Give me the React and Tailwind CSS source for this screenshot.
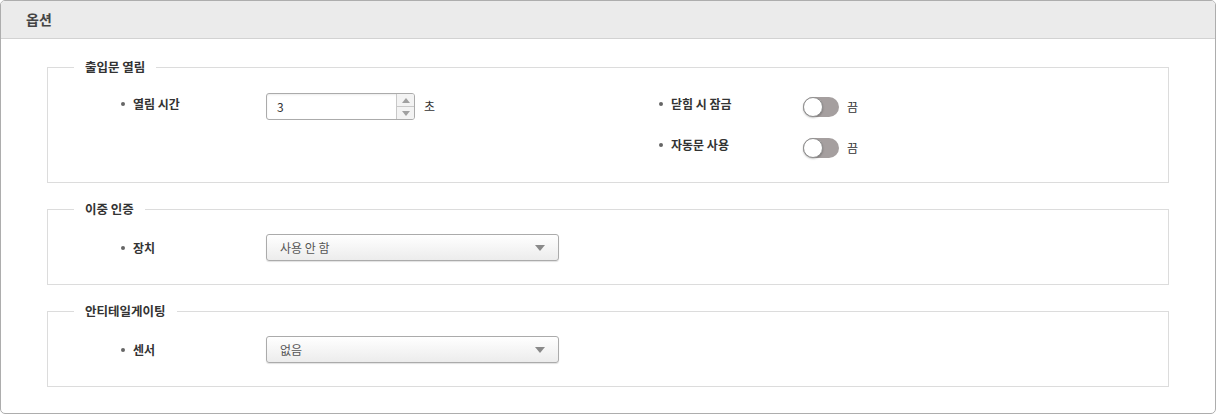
import React from "react";

const FONT = "font-['Noto_Sans_CJK_KR','Noto_Sans',sans-serif]";

function Bullet({ offset = "ml-[1px]" }) {
  return <span className={`${offset} w-[4px] h-[4px] rounded-full bg-[#666] shrink-0`} />;
}

function Label({ children, width = "w-[146px]", offset, shift = "pb-[5px]" }) {
  return (
    <div className={`${width} shrink-0 flex items-center h-[27px] ${shift}`}>
      <Bullet offset={offset} />
      <span className="ml-[8px] text-[12px] font-bold text-[#333] leading-[18px]">{children}</span>
    </div>
  );
}

function Fieldset({ title, pad, children }) {
  return (
    <div className={`relative border border-[#dcdcdc] ${pad}`}>
      <span className="absolute -top-[10px] left-[26px] px-[11px] bg-white text-[12.5px] font-bold text-[#333] leading-[18px]">
        {title}
      </span>
      {children}
    </div>
  );
}

function Toggle() {
  return (
    <div className="relative w-[36px] h-[20px] rounded-full bg-[#a59f9f]">
      <div className="absolute left-0 top-0 w-[20px] h-[20px] rounded-full bg-white border border-[#8f8f8f] shadow-[0_1px_2px_rgba(0,0,0,0.25)]" />
    </div>
  );
}

function Spinner() {
  return (
    <div className="flex items-center">
      <div className="w-[149px] h-[27px] border border-[#ababab] rounded-[3px] flex overflow-hidden shadow-[inset_0_1px_2px_rgba(0,0,0,0.08)] bg-white">
        <div className="flex-1 flex items-center pl-[10px] text-[12px] text-[#333]">3</div>
        <div className="w-[18px] border-l border-[#c8c8c8] flex flex-col bg-[#f3f3f3]">
          <div className="flex-1 flex items-center justify-center border-b border-[#c8c8c8]">
            <svg width="8" height="5" viewBox="0 0 8 5"><path d="M0 5 L4 0 L8 5 Z" fill="#a0a0a0" /></svg>
          </div>
          <div className="flex-1 flex items-center justify-center">
            <svg width="8" height="5" viewBox="0 0 8 5"><path d="M0 0 L8 0 L4 5 Z" fill="#a0a0a0" /></svg>
          </div>
        </div>
      </div>
      <span className="ml-[9px] mb-[1px] text-[12px] text-[#333]">초</span>
    </div>
  );
}

function Select({ value }) {
  return (
    <div className="w-[293px] h-[27px] border border-[#ababab] rounded-[3px] bg-gradient-to-b from-white to-[#ececec] shadow-[0_1px_1px_rgba(0,0,0,0.12)] flex items-center justify-between pl-[13px] pr-[13px]">
      <span className="text-[12px] text-[#555]">{value}</span>
      <svg width="10" height="6" viewBox="0 0 10 6"><path d="M0 0 L10 0 L5 6 Z" fill="#8a8a8a" /></svg>
    </div>
  );
}

export default function App() {
  return (
    <div className={`w-[1216px] h-[414px] bg-white ${FONT}`}>
      <div className="h-full border border-[#adadad] rounded-[5px] overflow-hidden flex flex-col">
        <div className="h-[38px] shrink-0 bg-[#ebebeb] border-b border-[#d2d2d2] flex items-center pl-[25px] text-[14px] font-bold text-[#444]">
          옵션
        </div>
        <div className="px-[46px] pt-[28px] flex flex-col gap-[26px]">
          <Fieldset title="출입문 열림" pad="pt-[25px] pb-[21px]">
            <div className="flex pl-[72px]">
              <div className="w-[536px] shrink-0 flex items-start">
                <Label>열림 시간</Label>
                <Spinner />
              </div>
              <div className="flex flex-col gap-[14px]">
                <div className="flex items-center h-[27px]">
                  <Label width="w-[147px]" offset="ml-[3px]">닫힘 시 잠금</Label>
                  <Toggle />
                  <span className="ml-[8px] text-[12px] text-[#333]">끔</span>
                </div>
                <div className="flex items-center h-[27px]">
                  <Label width="w-[147px]" offset="ml-[3px]">자동문 사용</Label>
                  <Toggle />
                  <span className="ml-[8px] text-[12px] text-[#333]">끔</span>
                </div>
              </div>
            </div>
          </Fieldset>
          <Fieldset title="이중 인증" pad="pt-[24px] pb-[23px]">
            <div className="flex pl-[72px]">
              <Label shift="pb-[0px]">장치</Label>
              <Select value="사용 안 함" />
            </div>
          </Fieldset>
          <Fieldset title="안티테일게이팅" pad="pt-[24px] pb-[23px]">
            <div className="flex pl-[72px]">
              <Label shift="pb-[0px]">센서</Label>
              <Select value="없음" />
            </div>
          </Fieldset>
        </div>
      </div>
    </div>
  );
}
